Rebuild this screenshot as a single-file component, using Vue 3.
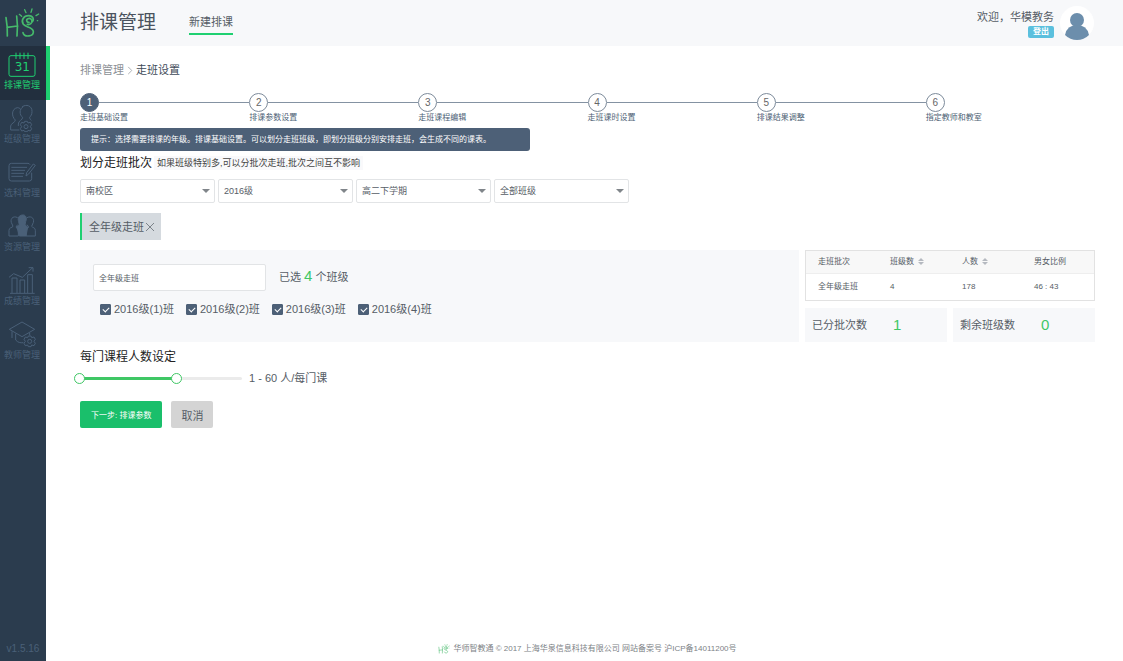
<template>
  <div class="layout">
    <aside class="sidebar">
      <a class="logo" href="#" aria-label="HS">
        <svg viewBox="0 0 138 138" class="logo-icon"><use href="#hs-mark" /></svg>
      </a>
      <nav>
        <a
          v-for="item in menu"
          :key="item.name"
          href="#"
          class="menu-item"
          :class="{ active: item.name === activeMenu }"
          @click.prevent="activeMenu = item.name"
        >
          <svg class="menu-icon" viewBox="0 0 84 84" aria-hidden="true">
            <g v-if="item.icon === 'calendar'">
              <rect x="3" y="17" width="78" height="62" rx="6" />
              <path d="M24 8V27M36 8V27M48 8V27M60 8V27" />
              <text x="43" y="64">31</text>
            </g>
            <g v-else-if="item.icon === 'class'">
              <path d="M34 78H8V66C8 58 22 56 22 48C10 38 10 14 28 11C32 11 36 13 38 16M42 9C54-1 73 5 72 23C72 32 68 36 65 40C65 44 67 46 70 49M46 8C33 14 34 34 44 40C44 49 31 49 31 60V66" />
              <circle cx="54" cy="68" r="6" />
              <path d="M50 52H58L60 57L67 55L71 62L67 68L71 74L67 81L60 79L58 83H50L48 79L41 81L37 74L41 68L37 62L41 55L48 57Z" />
            </g>
            <g v-else-if="item.icon === 'form'">
              <path d="M66 20Q64 16 60 16H10Q3 16 3 23V62Q3 69 10 69H64Q71 69 71 62V44" />
              <path d="M10 28H57M10 37H51M10 46H48M10 55H45" />
              <path d="M56 44L76 18L82 22L62 48L54 54Z" />
            </g>
            <g v-else-if="item.icon === 'resource'">
              <path class="fill" d="M43 9C53 7 58 19 53 29L51 39L59 45L54 72H34L27 45L34 39L32 29C28 18 33 10 43 9Z" />
              <path d="M29 17C14 9 4 23 12 36L15 43C12 48 3 46 3 55V72H31V54L24 45L29 38M57 17C72 9 82 23 74 36L71 43C74 48 82 46 82 55V72H54V54L62 45L57 38" />
            </g>
            <g v-else-if="item.icon === 'chart'">
              <path d="M3 34L17 23L43 34L74 5M62 5H75V17M6 82H80M12 81V36H27V81M36 81V42H50V81M59 81V26H73V81" />
            </g>
            <g v-else>
              <path d="M4 28L42 6L80 28L42 50ZM23 41V60C30 68 37 69 46 68M12 34V54M65 39V46" />
              <circle cx="65" cy="64" r="6" />
              <path d="M61 48H69L71 53L78 51L82 58L78 64L82 70L78 77L71 75L69 80H61L59 75L52 77L48 70L52 64L48 58L52 51L59 53Z" />
            </g>
          </svg>
          <span>{{ item.name }}</span>
        </a>
      </nav>
      <span class="version">v1.5.16</span>
    </aside>

    <div class="page">
      <header class="header">
        <h1>排课管理</h1>
        <a class="tab" href="#">新建排课</a>
        <div class="user">
          <span class="welcome">欢迎，华模教务</span>
          <button type="button" class="logout">登出</button>
        </div>
        <svg class="avatar" viewBox="0 0 34 34" aria-hidden="true">
          <circle cx="17" cy="17" r="17" fill="#fff" />
          <circle cx="17" cy="14" r="7" fill="#6c8eac" />
          <path d="M5 29Q7 19 17 19Q27 19 29 29Q24 34 17 34Q10 34 5 29Z" fill="#6c8eac" />
        </svg>
      </header>

      <main class="content">
        <div class="breadcrumb">
          <a href="#">排课管理</a>
          <svg viewBox="0 0 6 10" aria-hidden="true"><path d="M1 1L5 5L1 9" /></svg>
          <span>走班设置</span>
        </div>

        <ol class="steps">
          <li v-for="(step, i) in steps" :key="step" :class="{ current: i === 0 }">
            <span class="step-num">{{ i + 1 }}</span>
            <span class="step-name">{{ step }}</span>
          </li>
        </ol>

        <p class="tip">提示：选择需要排课的年级。排课基础设置。可以划分走班班级，即划分班级分别安排走班，会生成不同的课表。</p>

        <div class="section-title">
          <h2>划分走班批次</h2>
          <span class="note">如果班级特别多,可以分批次走班,批次之间互不影响</span>
        </div>

        <div class="filters">
          <label v-for="filter in filters" :key="filter.label" class="select">
            <select v-model="filter.value" :aria-label="filter.label">
              <option>{{ filter.value }}</option>
            </select>
          </label>
        </div>

        <div class="batch-tag">
          <span>{{ batchName }}</span>
          <button type="button" aria-label="删除">
            <svg viewBox="0 0 10 10"><path d="M1 1L9 9M9 1L1 9" /></svg>
          </button>
        </div>

        <div class="batch">
          <section class="panel">
            <div class="panel-top">
              <input v-model="batchName" type="text" class="name-input" aria-label="走班批次" />
              <span class="picked">已选 <b>{{ checkedCount }}</b> 个班级</span>
            </div>
            <div class="classes">
              <label v-for="item in classes" :key="item.name">
                <input v-model="item.checked" type="checkbox" />
                <span>{{ item.name }}</span>
              </label>
            </div>
          </section>

          <div class="summary">
            <table>
              <thead>
                <tr>
                  <th>走班批次</th>
                  <th>班级数 <i class="sort"></i></th>
                  <th>人数 <i class="sort"></i></th>
                  <th>男女比例</th>
                </tr>
              </thead>
              <tbody>
                <tr>
                  <td>{{ batchName }}</td>
                  <td>{{ checkedCount }}</td>
                  <td>178</td>
                  <td>46 : 43</td>
                </tr>
              </tbody>
            </table>
            <div class="stats">
              <div class="stat"><span>已分批次数</span><b>1</b></div>
              <div class="stat"><span>剩余班级数</span><b>{{ classes.length - checkedCount }}</b></div>
            </div>
          </div>
        </div>

        <h2 class="range-title">每门课程人数设定</h2>
        <div class="range-row">
          <div class="range">
            <div class="range-track">
              <div class="range-fill" :style="{ marginLeft: `${percent(low)}%`, width: `${percent(high) - percent(low)}%` }"></div>
            </div>
            <input v-model.number="low" type="range" min="1" max="100" aria-label="最少人数" />
            <input v-model.number="high" type="range" min="1" max="100" aria-label="最多人数" />
          </div>
          <span>{{ low }} - {{ high }} 人/每门课</span>
        </div>

        <div class="actions">
          <button type="button" class="btn-next">下一步: 排课参数</button>
          <button type="button" class="btn-cancel">取消</button>
        </div>
      </main>

      <footer class="footer">
        <svg viewBox="10 20 112 100" aria-hidden="true">
          <g id="hs-mark" fill="none" stroke="#46ba6b" stroke-width="5" stroke-linecap="round" stroke-linejoin="round">
            <path d="M18 53Q23 80 22 108M50 48Q54 76 51 108M21 82L53 78" />
            <path d="M87 67C80 68 77 59 84 56C92 53 98 60 95 67C92 73 86 75 82 73M95 67C104 60 100 47 86 47C71 47 62 61 70 73C77 82 98 81 100 94C102 109 74 114 69 98" />
            <path stroke-width="4" d="M58 43L65 49M74 29L78 38M96 27L93 37M116 42L108 47M112 62H113" />
          </g>
        </svg>
        <span>华师智教通 © 2017 上海华泉信息科技有限公司 网站备案号 沪ICP备14011200号</span>
      </footer>
    </div>
  </div>
</template>

<script setup>
import { ref, computed } from 'vue';

const menu = [
  { name: '排课管理', icon: 'calendar' },
  { name: '班级管理', icon: 'class' },
  { name: '选科管理', icon: 'form' },
  { name: '资源管理', icon: 'resource' },
  { name: '成绩管理', icon: 'chart' },
  { name: '教师管理', icon: 'teacher' },
];
const activeMenu = ref('排课管理');

const steps = ['走班基础设置', '排课参数设置', '走班课程编辑', '走班课时设置', '排课结果调整', '指定教师和教室'];

const filters = ref([
  { label: '校区', value: '南校区' },
  { label: '年级', value: '2016级' },
  { label: '学期', value: '高二下学期' },
  { label: '班级', value: '全部班级' },
]);

const batchName = ref('全年级走班');
const classes = ref([1, 2, 3, 4].map((n) => ({ name: `2016级(${n})班`, checked: true })));
const checkedCount = computed(() => classes.value.filter((item) => item.checked).length);

const low = ref(1);
const high = ref(60);
const percent = (value) => ((value - 1) / 99) * 100;
</script>

<style>
body {
  margin: 0;
  background: #fff;
}
</style>

<style scoped>
* {
  box-sizing: border-box;
}

.layout {
  display: flex;
  min-height: 100vh;
  font-family: "Liberation Sans", "Noto Sans CJK SC", sans-serif;
  font-size: 11px;
  line-height: 16px;
  color: #565d66;
}

a {
  color: inherit;
  text-decoration: none;
}

button,
input,
select {
  font-family: inherit;
  color: inherit;
  margin: 0;
}

button {
  border: 0;
  cursor: pointer;
}

h1,
h2,
p {
  margin: 0;
  font-weight: normal;
}

.sidebar {
  display: flex;
  flex-direction: column;
  flex: none;
  width: 46px;
  background: #2b3c4e;
  color: #4a6078;
}

.logo,
.logo-icon {
  display: block;
  width: 46px;
  height: 46px;
}

.menu-item {
  display: flex;
  flex-direction: column;
  align-items: center;
  width: 46px;
  height: 54px;
  padding: 4px 2px 0 0;
  font-size: 9px;
  line-height: 14px;
  white-space: nowrap;
}

.menu-icon {
  width: 28px;
  height: 28px;
  fill: none;
  stroke: currentColor;
  stroke-width: 3;
}

.menu-icon text {
  font-family: "DejaVu Sans", sans-serif;
  font-size: 36px;
  text-anchor: middle;
  fill: currentColor;
  stroke: none;
}

.menu-icon .fill {
  fill: currentColor;
}

.menu-item.active {
  width: 50px;
  border-right: 4px solid #1fd071;
  background: #222f3e;
  color: #1fd071;
}

.version {
  margin-top: auto;
  padding-bottom: 4px;
  text-align: center;
  font-size: 10px;
}

.page {
  display: flex;
  flex-direction: column;
  flex: 1;
  min-width: 0;
}

.header {
  display: flex;
  align-items: center;
  height: 46px;
  padding: 0 29px 0 34px;
  background: #f7f8fa;
}

.header h1 {
  font-size: 19px;
  line-height: 28px;
  color: #4b535e;
}

.tab {
  margin: 2px 0 0 33px;
  padding-bottom: 2px;
  border-bottom: 2px solid #1fd071;
  line-height: 18px;
}

.user {
  display: flex;
  flex-direction: column;
  align-items: flex-end;
  margin-left: auto;
}

.welcome {
  line-height: 18px;
}

.logout {
  width: 26px;
  height: 12px;
  padding: 0;
  border-radius: 2px;
  background: #5bc0de;
  color: #fff;
  font-size: 8px;
  font-weight: bold;
  line-height: 12px;
}

.avatar {
  width: 34px;
  height: 34px;
  margin-left: 6px;
}

.content {
  padding: 16px 28px 16px 34px;
}

.breadcrumb {
  display: flex;
  align-items: center;
  gap: 3px;
  color: #3f4b59;
}

.breadcrumb a {
  color: #8c9095;
}

.breadcrumb svg {
  width: 6px;
  height: 9px;
  fill: none;
  stroke: #a5a9ae;
}

.steps {
  display: grid;
  grid-template-columns: repeat(6, 1fr);
  margin: 15px 0 0;
  padding: 0;
  list-style: none;
}

.steps li {
  display: grid;
  grid-template-columns: 19px 1fr;
  align-items: center;
  color: #4d5f75;
}

.steps li:not(:last-child)::after {
  content: "";
  grid-area: 1 / 2;
  height: 1px;
  background: #8492a2;
}

.step-num {
  width: 19px;
  height: 19px;
  border: 1px solid #7d8b9b;
  border-radius: 50%;
  font-size: 10px;
  line-height: 17px;
  text-align: center;
  color: #666;
}

.current .step-num {
  border-color: #4d6077;
  background: #4d6077;
  color: #fff;
}

.step-name {
  grid-area: 2 / 1 / 3 / 3;
  font-size: 8px;
  line-height: 12px;
}

.tip {
  width: 450px;
  max-width: 100%;
  margin-top: 4px;
  padding: 4px 11px 3px;
  border-radius: 3px;
  background: #4d6077;
  color: #fff;
  font-size: 8px;
}

.section-title {
  display: flex;
  align-items: center;
  gap: 2px;
  margin-top: 4px;
}

h2 {
  font-size: 12px;
  line-height: 16px;
  color: #222;
}

.note {
  padding: 0 3px;
  background: #f9f9fb;
  font-size: 9px;
  line-height: 14px;
  color: #444;
}

.filters {
  display: flex;
  gap: 3px;
  margin-top: 8px;
}

.select {
  position: relative;
  width: 135px;
}

.select::after {
  content: "";
  position: absolute;
  top: 10px;
  right: 5px;
  border: 4px solid transparent;
  border-top-color: #80858a;
  border-bottom: 0;
  pointer-events: none;
}

select {
  appearance: none;
  display: block;
  width: 100%;
  height: 24px;
  padding: 0 5px;
  border: 1px solid #e2e4e6;
  border-radius: 2px;
  background: #fff;
  font-size: 9px;
}

.batch-tag {
  display: inline-flex;
  align-items: center;
  gap: 1px;
  height: 27px;
  margin-top: 10px;
  padding: 0 6px 0 7px;
  border-left: 2px solid #1fd071;
  background: #d5dadf;
}

.batch-tag button {
  display: flex;
  padding: 0;
  background: none;
}

.batch-tag svg {
  width: 10px;
  height: 10px;
  fill: none;
  stroke: #7c838a;
}

.batch {
  display: flex;
  gap: 6px;
  margin-top: 10px;
}

.panel {
  flex: 1;
  padding: 14px 13px;
  background: #f7f8fa;
}

.panel-top {
  display: flex;
  gap: 13px;
}

.name-input {
  width: 173px;
  height: 27px;
  padding: 0 5px;
  border: 1px solid #e2e4e6;
  border-radius: 2px;
  background: #fff;
  font-size: 8px;
}

.picked {
  line-height: 24px;
}

b {
  font-size: 15px;
  font-weight: normal;
  color: #3fc765;
}

.classes {
  display: flex;
  gap: 12px;
  margin: 10px 0 0 7px;
}

.classes label {
  display: flex;
  align-items: center;
  gap: 3px;
}

.classes input {
  appearance: none;
  width: 11px;
  height: 11px;
  border-radius: 1px;
  background: #fff;
  border: 1px solid #4d6077;
}

.classes input:checked {
  background: #4d6077;
}

.classes input:checked::after {
  content: "";
  display: block;
  width: 5px;
  height: 3px;
  margin: 2px;
  border: solid #fff;
  border-width: 0 0 1px 1px;
  transform: rotate(-45deg);
}

.summary {
  width: 290px;
}

table {
  width: 100%;
  height: 51px;
  border: 1px solid #e2e2e2;
  border-spacing: 0;
  table-layout: fixed;
  font-size: 8px;
  line-height: 12px;
  text-align: left;
}

th,
td {
  padding: 0 0 0 12px;
  font-weight: normal;
}

th {
  height: 23px;
  border-bottom: 1px solid #eee;
  background: #f8f8f8;
}

.sort {
  display: inline-flex;
  flex-direction: column;
  gap: 1px;
  margin-left: 2px;
  vertical-align: middle;
}

.sort::before,
.sort::after {
  content: "";
  border: 3px solid transparent;
}

.sort::before {
  border-top: 0;
  border-bottom-color: #b5b9c0;
}

.sort::after {
  border-bottom: 0;
  border-top-color: #b5b9c0;
}

.stats {
  display: grid;
  grid-template-columns: 1fr 1fr;
  gap: 6px;
  margin-top: 7px;
}

.stat {
  display: flex;
  align-items: center;
  gap: 26px;
  height: 34px;
  padding: 0 7px;
  background: #f7f8fa;
}

.range-title {
  margin-top: 7px;
}

.range-row {
  display: flex;
  align-items: center;
  gap: 7px;
  margin-top: 5px;
}

.range {
  position: relative;
  width: 162px;
  height: 16px;
  padding-top: 7px;
}

.range-track {
  border-radius: 2px;
  background: #ebebeb;
}

.range-fill {
  height: 3px;
  background: #3fc765;
}

.range input {
  appearance: none;
  position: absolute;
  top: 0;
  left: -6px;
  width: 173px;
  height: 16px;
  background: none;
  pointer-events: none;
}

.range input::-webkit-slider-thumb {
  appearance: none;
  width: 11px;
  height: 11px;
  border: 1px solid #3fc765;
  border-radius: 50%;
  background: #fff;
  pointer-events: auto;
}

.actions {
  display: flex;
  gap: 9px;
  margin-top: 15px;
}

.actions button {
  height: 27px;
  padding: 0 10px;
  border-radius: 2px;
}

.actions .btn-next {
  padding: 0 11px;
  background: #1abf6b;
  color: #fff;
  font-size: 8px;
}

.actions .btn-cancel {
  background: #d4d4d4;
  font-size: 11px;
}

.footer {
  display: flex;
  align-items: center;
  justify-content: center;
  gap: 3px;
  margin-top: auto;
  padding: 0 28px 4px 34px;
  font-size: 8px;
  color: #7d8286;
}

.footer svg {
  width: 12px;
  height: 12px;
}
</style>
